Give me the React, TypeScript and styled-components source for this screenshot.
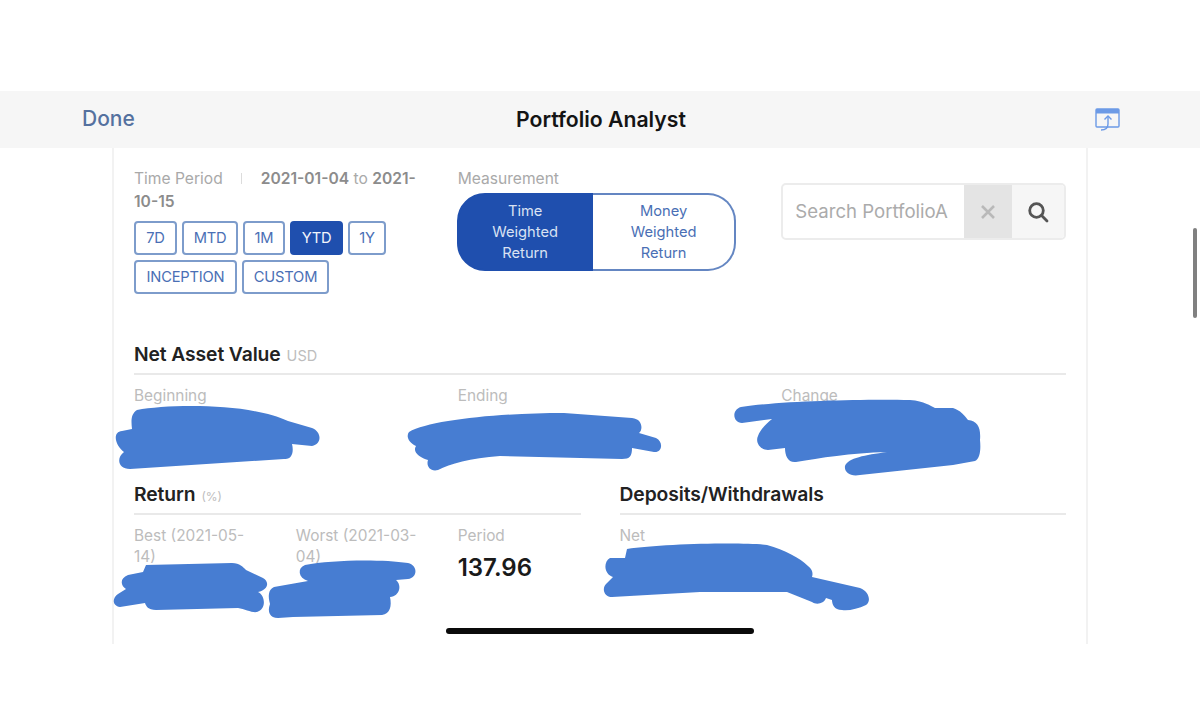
import React from "react";
import styled, { createGlobalStyle } from "styled-components";

const Global = createGlobalStyle`
  html, body { margin: 0; padding: 0; background: #fff; }
  body { font-family: Inter, "Liberation Sans", sans-serif; }
`;

const Frame = styled.div`
  position: relative;
  width: 1200px;
  height: 716px;
  padding-top: 91px;
  box-sizing: border-box;
  overflow: hidden;
  background: #fff;
`;

const TopBar = styled.header`
  height: 57px;
  background: #f6f6f6;
  display: grid;
  grid-template-columns: 1fr auto 1fr;
  align-items: center;
  padding: 0 80px 2px 82px;
  box-sizing: border-box;
`;

const Done = styled.span`
  font-size: 21px;
  font-weight: 500;
  color: #54719f;
`;

const Title = styled.h1`
  margin: 0;
  font-size: 21.2px;
  font-weight: 600;
  color: #141414;
`;

const ShareBox = styled.span`
  justify-self: end;
  display: flex;
  margin-top: 2px;
`;

const Card = styled.main`
  width: 976px;
  height: 496px;
  margin: 0 auto;
  box-sizing: border-box;
  padding: 19px 20px 0 20px;
  border-left: 2px solid #f2f2f2;
  border-right: 2px solid #f2f2f2;
  overflow: hidden;
`;

const TopGrid = styled.section`
  display: grid;
  grid-template-columns: repeat(3, minmax(0, 1fr));
  column-gap: 39px;
  height: 128px;
`;

const MutedLine = styled.div`
  font-size: 15.6px;
  line-height: 23px;
  color: #a9a9a9;
`;

const Divider = styled.span`
  display: inline-block;
  width: 1px;
  height: 11px;
  margin: 0 19px 0 18px;
  background: #dcdcdc;
`;

const Strong = styled.b`
  font-weight: 600;
  color: #8c8c8c;
`;

const Periods = styled.div`
  display: flex;
  flex-wrap: wrap;
  gap: 5px;
  margin-top: 8px;
`;

const PeriodButton = styled.button<{ $active?: boolean; $width: number }>`
  height: 34px;
  padding: 0;
  width: ${(p) => p.$width}px;
  box-sizing: border-box;
  border: 2px solid ${(p) => (p.$active ? "#1f4fae" : "#7d9ccb")};
  border-radius: 4px;
  background: ${(p) => (p.$active ? "#1f4fae" : "#fff")};
  color: ${(p) => (p.$active ? "#f2f5fb" : "#4a6fb5")};
  font: 400 14.7px Inter, "Liberation Sans", sans-serif;
  letter-spacing: -0.2px;
`;

const Segments = styled.div`
  display: flex;
  width: 279px;
  height: 78px;
  margin-top: 3px;
  margin-left: -0.5px;
`;

const Segment = styled.div<{ $active?: boolean }>`
  flex: ${(p) => (p.$active ? "0 0 136px" : "1")};
  box-sizing: border-box;
  display: flex;
  align-items: center;
  justify-content: center;
  text-align: center;
  font-size: 14.7px;
  line-height: 21px;
  border: 2px solid ${(p) => (p.$active ? "#1f4fae" : "#6486c2")};
  border-left-width: ${(p) => (p.$active ? "2px" : "0")};
  border-radius: ${(p) => (p.$active ? "28px 0 0 28px" : "0 28px 28px 0")};
  background: ${(p) => (p.$active ? "#1f4fae" : "#fff")};
  color: ${(p) => (p.$active ? "#d9e2f3" : "#4a6fb5")};
`;

const Search = styled.div`
  display: flex;
  height: 57px;
  margin-top: 16px;
  box-sizing: border-box;
  border: 2px solid #ececec;
  border-radius: 5px;
  overflow: hidden;
`;

const SearchText = styled.span`
  flex: 1;
  min-width: 0;
  margin: 0 16px 0 12px;
  font-size: 18.6px;
  line-height: 53px;
  color: #ababab;
  white-space: nowrap;
  overflow: hidden;
`;

const ClearCell = styled.span`
  flex: 0 0 48px;
  display: flex;
  align-items: center;
  justify-content: center;
  background: #e4e4e4;
`;

const SearchCell = styled.span`
  flex: 0 0 52px;
  display: flex;
  align-items: center;
  justify-content: center;
  background: #f6f6f6;
`;

const SectionHead = styled.h2`
  margin: 0;
  height: 24px;
  padding-bottom: 7px;
  border-bottom: 2px solid #e9e9e9;
  font-size: 19.3px;
  line-height: 24px;
  font-weight: 600;
  letter-spacing: -0.1px;
  color: #222;
  box-sizing: content-box;
`;

const Unit = styled.small<{ $size: number }>`
  font-size: ${(p) => p.$size}px;
  font-weight: 400;
  color: #bdbdbd;
  margin-left: 6px;
  letter-spacing: 0;
`;

const NavSection = styled.section`
  margin-top: 47px;
  height: 140px;
`;

const MetricGrid = styled.div<{ $cols: number }>`
  display: grid;
  grid-template-columns: repeat(${(p) => p.$cols}, minmax(0, 1fr));
  column-gap: 39px;
  margin-top: 10px;
`;

const Label = styled.div`
  font-size: 15.4px;
  line-height: 21px;
  color: #bcbcbc;
`;

const Value = styled.div`
  margin-top: 6px;
  font-size: 24px;
  line-height: 32px;
  font-weight: 600;
  color: #1a1a1a;
`;

const Bottom = styled.section`
  display: grid;
  grid-template-columns: 1fr 1fr;
  column-gap: 39px;
`;

const Scribbles = styled.svg`
  position: absolute;
  left: 0;
  top: 0;
  pointer-events: none;
`;

const HomeBar = styled.div`
  position: absolute;
  left: 446px;
  top: 628px;
  width: 308px;
  height: 6px;
  border-radius: 3px;
  background: #0a0a0a;
`;

const ScrollThumb = styled.div`
  position: absolute;
  left: 1193px;
  top: 228px;
  width: 4px;
  height: 90px;
  border-radius: 2px;
  background: #808080;
`;

const blots = [
  "M137 410 C170 404 250 403 288 421 L312 428 C322 432 322 444 312 446 L292 444 C294 452 292 460 284 459 L130 469 C118 469 116 458 124 452 C115 445 112 432 122 431 L132 429 C131 420 131 414 137 410 Z",
  "M409 432 C430 420 500 413 564 413 L632 418 C643 419 643 430 639 433 L656 438 C664 442 662 453 654 452 L632 448 C632 456 630 459 622 459 L500 456 C470 458 450 464 438 470 C430 472 426 466 428 460 C420 458 412 452 416 446 C408 442 406 436 409 432 Z",
  "M741 407 C780 401 860 399 910 400 C925 401 930 406 935 408 L953 408 C960 410 965 416 968 420 C978 421 981 428 980 440 C981 450 980 459 975 461 L953 465 L860 475 C850 477 844 472 845 466 C848 458 865 455 887 452 C850 453 820 458 796 462 C788 463 785 456 785 448 L768 450 C760 450 755 442 758 436 C760 430 766 424 772 419 L742 423 C733 423 731 410 741 407 Z",
  "M146 565 L232 563 C240 563 243 567 246 570 L263 578 C270 582 268 590 258 592 C266 596 266 610 257 612 C252 613 245 609 238 608 L156 610 C148 610 146 606 145 603 L120 607 C112 606 112 598 118 594 L126 589 C120 585 120 578 128 575 L143 572 Z",
  "M305 565 C330 560 380 559 408 563 C418 565 418 578 408 579 L396 580 C402 585 400 596 390 597 C392 606 390 614 382 615 L293 617 L278 618 C270 618 267 612 270 604 C268 596 268 590 274 587 L308 581 C298 578 297 568 305 565 Z",
  "M627 549 C660 544 740 542 767 545 C785 550 800 558 808 566 C813 570 813 574 812 577 L860 588 C870 592 871 602 866 605 C858 609 848 611 842 610 C834 610 832 604 832 600 L826 598 C824 604 816 605 812 602 L787 592 L700 592 L612 597 C604 597 601 588 607 583 L613 577 C604 574 603 562 610 558 L625 558 Z",
];

export default function App() {
  return (
    <Frame>
      <Global />
      <TopBar>
        <Done>Done</Done>
        <Title>Portfolio Analyst</Title>
        <ShareBox>
          <svg width="25" height="24" viewBox="0 0 25 24" fill="none" stroke="#6c9ae6" strokeWidth="1.4">
            <rect x="1" y="1" width="23" height="18" rx="1" />
            <rect x="1" y="1" width="23" height="4.5" fill="#6c9ae6" stroke="none" />
            <path d="M13 8 L13 16 C13 20 10 22 6 22" />
            <path d="M9.5 11.5 L13 8 L16.5 11.5" />
          </svg>
        </ShareBox>
      </TopBar>
      <Card>
        <TopGrid>
          <div>
            <MutedLine>
              Time Period<Divider /><Strong>2021-01-04</Strong> to <Strong>2021-10-15</Strong>
            </MutedLine>
            <Periods>
              <PeriodButton $width={43}>7D</PeriodButton>
              <PeriodButton $width={56}>MTD</PeriodButton>
              <PeriodButton $width={42}>1M</PeriodButton>
              <PeriodButton $width={53} $active>YTD</PeriodButton>
              <PeriodButton $width={38}>1Y</PeriodButton>
              <PeriodButton $width={103}>INCEPTION</PeriodButton>
              <PeriodButton $width={87}>CUSTOM</PeriodButton>
            </Periods>
          </div>
          <div>
            <MutedLine>Measurement</MutedLine>
            <Segments>
              <Segment $active>Time<br />Weighted<br />Return</Segment>
              <Segment>Money<br />Weighted<br />Return</Segment>
            </Segments>
          </div>
          <div>
            <Search>
              <SearchText>Search PortfolioAnalyst</SearchText>
              <ClearCell>
                <svg width="16" height="16" viewBox="0 0 16 16" stroke="#b9b9b9" strokeWidth="2.6">
                  <path d="M2 2 L14 14 M14 2 L2 14" />
                </svg>
              </ClearCell>
              <SearchCell>
                <svg width="22" height="22" viewBox="0 0 22 22" fill="none" stroke="#555" strokeWidth="2.8" strokeLinecap="round">
                  <circle cx="9.5" cy="9.5" r="6.8" />
                  <path d="M14.6 14.6 L20 20" />
                </svg>
              </SearchCell>
            </Search>
          </div>
        </TopGrid>
        <NavSection>
          <SectionHead>Net Asset Value<Unit $size={14.5}>USD</Unit></SectionHead>
          <MetricGrid $cols={3}>
            <Label>Beginning</Label>
            <Label>Ending</Label>
            <Label>Change</Label>
          </MetricGrid>
        </NavSection>
        <Bottom>
          <div>
            <SectionHead>Return<Unit $size={12}>(%)</Unit></SectionHead>
            <MetricGrid $cols={3}>
              <Label>Best (2021-05-14)</Label>
              <Label>Worst (2021-03-04)</Label>
              <div>
                <Label>Period</Label>
                <Value>137.96</Value>
              </div>
            </MetricGrid>
          </div>
          <div>
            <SectionHead>Deposits/Withdrawals</SectionHead>
            <MetricGrid $cols={1}>
              <Label>Net</Label>
            </MetricGrid>
          </div>
        </Bottom>
      </Card>
      <Scribbles width="1200" height="716" viewBox="0 0 1200 716" fill="#477dd2">
        {blots.map((d) => (
          <path key={d} d={d} />
        ))}
      </Scribbles>
      <HomeBar />
      <ScrollThumb />
    </Frame>
  );
}
